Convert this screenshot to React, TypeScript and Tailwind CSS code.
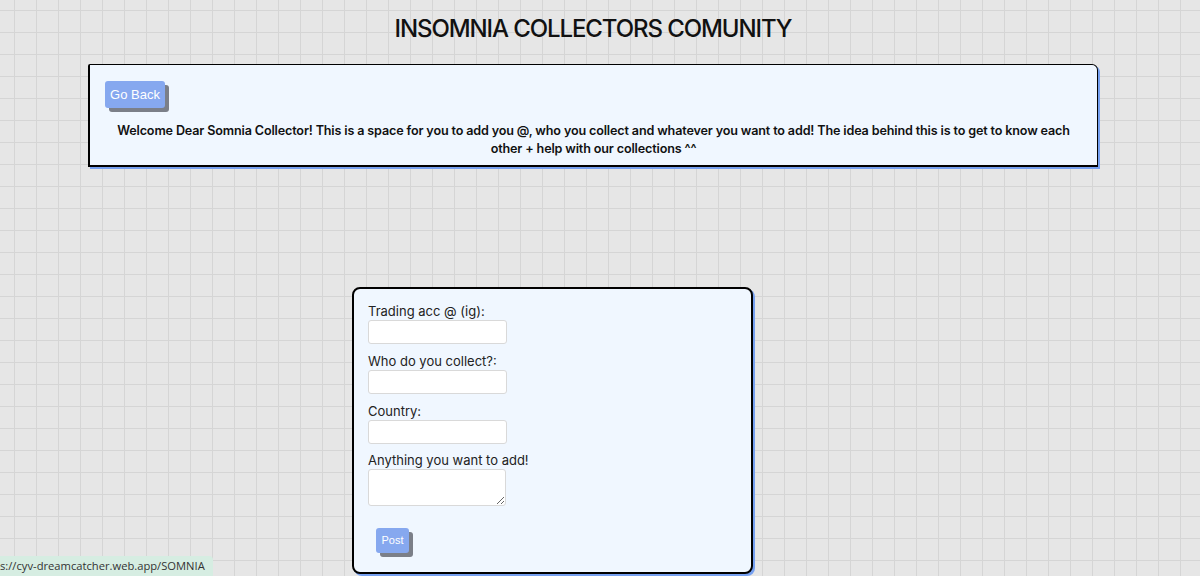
import React from 'react';

const fields = [
  { label: 'Trading acc @ (ig):', id: 'ig' },
  { label: 'Who do you collect?:', id: 'bias' },
  { label: 'Country:', id: 'country' },
];

export default function App() {
  return (
    <div className="relative min-h-screen h-[576px] overflow-hidden bg-[#e6e6e6] bg-[linear-gradient(to_right,#d5d5d5_1px,transparent_1px),linear-gradient(to_bottom,#d5d5d5_1px,transparent_1px)] bg-[size:22px_22px] bg-[position:14px_10px] font-['Inter','Noto_Sans',sans-serif]">
      {/* Title + intro box */}
      <div className="ml-[88px] w-[1010px] pt-[15px]">
        <h1 className="text-center text-[24px] leading-[28px] font-medium tracking-[-1.1px] text-[#111]">
          INSOMNIA COLLECTORS COMUNITY
        </h1>

        <div className="mt-[21px] h-[103px] border border-black border-l-2 border-b-2 rounded-tr-[6px] rounded-tl-[2px] bg-[#f0f7ff] shadow-[2px_2px_0_#76a0f0] px-[15px] pt-[16px]">
          <button className="h-[27px] w-[60px] rounded-[3px] bg-[#86a8ef] text-white text-[13px] font-['Liberation_Sans',Arial,sans-serif] shadow-[4px_4px_0_#7b7f88]">
            Go Back
          </button>
          <p className="mx-auto mt-[14px] w-[964px] text-center text-[12.6px] leading-[18px] font-semibold text-[#111] tracking-[-0.15px]">
            Welcome Dear Somnia Collector! This is a space for you to add you @, who you collect and whatever you want to add! The idea behind this is to get to know each other + help with our collections ^^
          </p>
        </div>
      </div>

      {/* Form card */}
      <div className="ml-[352px] mt-[120px] w-[401px] h-[287px] rounded-[8px] border-2 border-black bg-[#f0f7ff] shadow-[2px_2px_0_#76a0f0] pl-[14px] pt-[13px]">
        <div className="flex flex-col">
          {fields.map((f, i) => (
            <div key={f.id} className={i > 0 ? 'mt-[8px]' : ''}>
              <label htmlFor={f.id} className="block text-[13px] leading-[18px] text-[#222]">
                {f.label}
              </label>
              <input
                id={f.id}
                type="text"
                className="block h-[24px] w-[139px] rounded-[3px] border border-[#d9d9d9] bg-white"
              />
            </div>
          ))}
          <div className="mt-[7px]">
            <label htmlFor="extra" className="block text-[13px] leading-[18px] text-[#222]">
              Anything you want to add!
            </label>
            <textarea
              id="extra"
              className="block h-[37px] w-[138px] rounded-[3px] border border-[#d9d9d9] bg-white"
            />
          </div>
          <div className="pl-[8px] pt-[20px]">
            <button className="h-[25px] w-[33px] rounded-[3px] bg-[#86a8ef] text-white text-[11px] font-['Liberation_Sans',Arial,sans-serif] shadow-[4px_4px_0_#7b7f88]">
              Post
            </button>
          </div>
        </div>
      </div>

      {/* Browser link status bubble */}
      <div className="absolute bottom-0 left-0 h-[20px] rounded-tr-[4px] bg-[#d6ede2] pr-[8px] text-[11.2px] leading-[20px] text-[#333] font-['Open_Sans',sans-serif] whitespace-nowrap">
        s://cyv-dreamcatcher.web.app/SOMNIA
      </div>
    </div>
  );
}
